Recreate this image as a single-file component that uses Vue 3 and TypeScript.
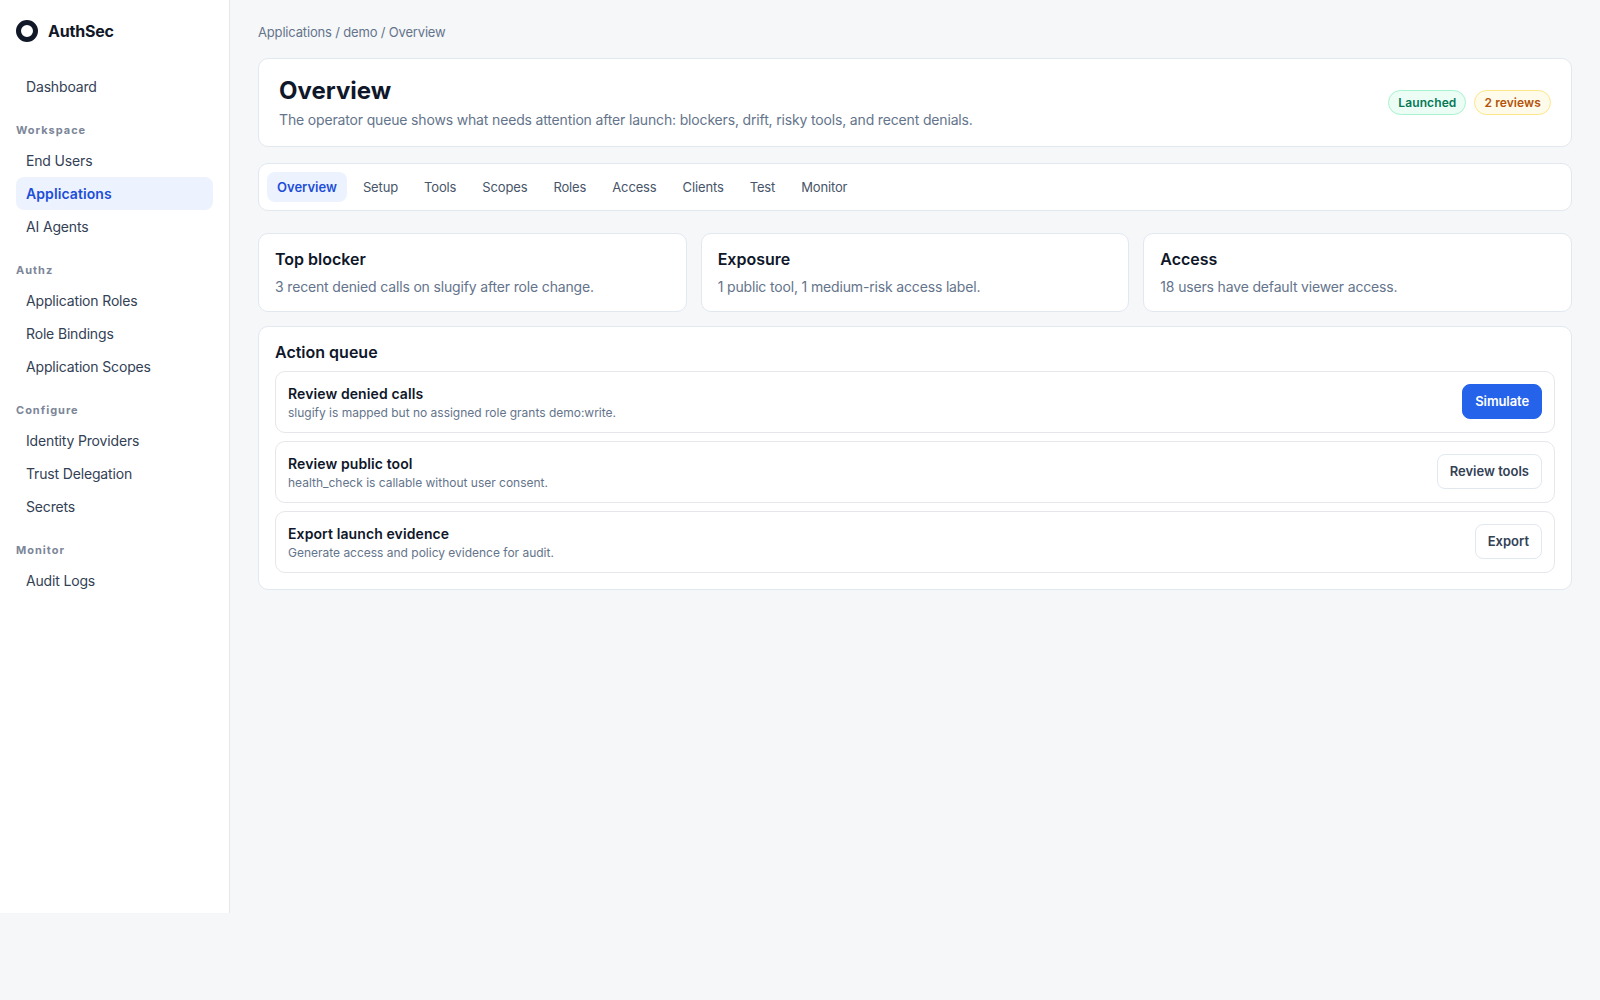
<script setup lang="ts">
const navGroups = [
  { label: '', items: ['Dashboard'] },
  { label: 'Workspace', items: ['End Users', 'Applications', 'AI Agents'] },
  { label: 'Authz', items: ['Application Roles', 'Role Bindings', 'Application Scopes'] },
  { label: 'Configure', items: ['Identity Providers', 'Trust Delegation', 'Secrets'] },
  { label: 'Monitor', items: ['Audit Logs'] }
]

const tabs = ['Overview', 'Setup', 'Tools', 'Scopes', 'Roles', 'Access', 'Clients', 'Test', 'Monitor']

const summaries = [
  { title: 'Top blocker', text: '3 recent denied calls on slugify after role change.' },
  { title: 'Exposure', text: '1 public tool, 1 medium-risk access label.' },
  { title: 'Access', text: '18 users have default viewer access.' }
]

const actions = [
  { title: 'Review denied calls', text: 'slugify is mapped but no assigned role grants demo:write.', button: 'Simulate', primary: true },
  { title: 'Review public tool', text: 'health_check is callable without user consent.', button: 'Review tools', primary: false },
  { title: 'Export launch evidence', text: 'Generate access and policy evidence for audit.', button: 'Export', primary: false }
]
</script>

<template>
  <div class="shell">
    <aside class="sidebar">
      <div class="brand">
        <span class="brand-mark"></span>
        <span class="brand-name">AuthSec</span>
      </div>
      <nav class="nav">
        <div v-for="group in navGroups" :key="group.label" class="nav-group">
          <div v-if="group.label" class="nav-label">{{ group.label }}</div>
          <a
            v-for="item in group.items"
            :key="item"
            class="nav-item"
            :class="{ active: item === 'Applications' }"
          >{{ item }}</a>
        </div>
      </nav>
    </aside>

    <main class="main">
      <div class="breadcrumb">Applications / demo / Overview</div>

      <header class="page-head">
        <div>
          <h1>Overview</h1>
          <p>The operator queue shows what needs attention after launch: blockers, drift, risky tools, and recent denials.</p>
        </div>
        <div class="badges">
          <span class="badge green">Launched</span>
          <span class="badge amber">2 reviews</span>
        </div>
      </header>

      <div class="tabs">
        <a v-for="tab in tabs" :key="tab" class="tab" :class="{ active: tab === 'Overview' }">{{ tab }}</a>
      </div>

      <section class="summary-grid">
        <div v-for="card in summaries" :key="card.title" class="card">
          <h3>{{ card.title }}</h3>
          <p>{{ card.text }}</p>
        </div>
      </section>

      <section class="card queue">
        <h3>Action queue</h3>
        <div class="queue-list">
          <div v-for="action in actions" :key="action.title" class="queue-row">
            <div>
              <div class="queue-title">{{ action.title }}</div>
              <div class="queue-text">{{ action.text }}</div>
            </div>
            <button class="btn" :class="{ primary: action.primary }">{{ action.button }}</button>
          </div>
        </div>
      </section>
    </main>
  </div>
</template>

<style>
html,
body {
  margin: 0;
  background: #f6f7f9;
}
</style>

<style scoped>
.shell {
  display: flex;
  align-items: flex-start;
  font-family: Inter, "Liberation Sans", sans-serif;
  color: #0f172a;
}
.sidebar {
  width: 230px;
  height: 913px;
  flex-shrink: 0;
  box-sizing: border-box;
  padding: 20px 16px;
  background: #fff;
  border-right: 1px solid #e5e7eb;
}
.brand {
  display: flex;
  align-items: center;
  gap: 10px;
  height: 22px;
  margin-bottom: 28px;
}
.brand-mark {
  width: 22px;
  height: 22px;
  box-sizing: border-box;
  border: 5px solid #111827;
  border-radius: 50%;
}
.brand-name {
  font-size: 16px;
  font-weight: 700;
  letter-spacing: -0.2px;
  color: #111827;
}
.nav-group {
  margin-bottom: 14px;
}
.nav-label {
  padding: 6px 0 7px;
  font-size: 11px;
  font-weight: 700;
  letter-spacing: 0.09em;
  color: #7c8698;
}
.nav-item {
  display: block;
  padding: 8px 10px;
  border-radius: 8px;
  font-size: 14px;
  letter-spacing: -0.16px;
  color: #334155;
}
.nav-item.active {
  background: #edf3fe;
  color: #1d4ed8;
  font-weight: 600;
  letter-spacing: 0.08px;
}
.main {
  flex: 1;
  min-width: 0;
  padding: 24px 28px;
}
.breadcrumb {
  margin-bottom: 18px;
  font-size: 13px;
  letter-spacing: -0.17px;
  color: #64748b;
}
.page-head {
  display: flex;
  align-items: center;
  justify-content: space-between;
  padding: 18px 20px;
  background: #fff;
  border: 1px solid #e2e8f0;
  border-radius: 10px;
}
.page-head h1 {
  margin: 0 0 5px;
  font-size: 24px;
  font-weight: 700;
  line-height: 1.2;
}
.page-head p {
  margin: 0;
  font-size: 14px;
  letter-spacing: -0.16px;
  color: #64748b;
}
.badges {
  display: flex;
  gap: 8px;
}
.badge {
  padding: 4px 9px;
  border: 1px solid;
  border-radius: 999px;
  font-size: 12px;
  font-weight: 600;
  line-height: 15px;
  letter-spacing: 0.1px;
}
.badge.green {
  background: #ecfdf5;
  border-color: #a7f3d0;
  color: #047857;
}
.badge.amber {
  background: #fffbeb;
  border-color: #fde68a;
  color: #b45309;
}
.tabs {
  display: flex;
  gap: 6px;
  margin: 16px 0 22px;
  padding: 8px;
  background: #fff;
  border: 1px solid #e2e8f0;
  border-radius: 10px;
}
.tab {
  padding: 7px 10px;
  border-radius: 8px;
  font-size: 13px;
  line-height: 16px;
  letter-spacing: -0.14px;
  color: #475569;
}
.tab.active {
  background: #edf3fe;
  color: #1d4ed8;
  font-weight: 600;
  letter-spacing: 0;
}
.summary-grid {
  display: grid;
  grid-template-columns: repeat(3, 1fr);
  gap: 14px;
  margin-bottom: 14px;
}
.card {
  padding: 15px 16px 16px;
  background: #fff;
  border: 1px solid #e2e8f0;
  border-radius: 10px;
}
.card h3 {
  margin: 0 0 9px;
  font-size: 16px;
  font-weight: 600;
}
.card p {
  margin: 0;
  font-size: 14px;
  letter-spacing: -0.16px;
  color: #64748b;
}
.queue-list {
  display: flex;
  flex-direction: column;
  gap: 8px;
}
.queue-row {
  display: flex;
  align-items: center;
  justify-content: space-between;
  padding: 12px;
  border: 1px solid #e5e7eb;
  border-radius: 10px;
}
.queue-title {
  font-size: 14px;
  font-weight: 600;
  line-height: 19px;
  letter-spacing: 0.1px;
}
.queue-text {
  margin-top: 2px;
  font-size: 12px;
  line-height: 15px;
  letter-spacing: -0.01px;
  color: #64748b;
}
.btn {
  height: 35px;
  padding: 0 12px 1px;
  background: #fff;
  border: 1px solid #e2e8f0;
  border-radius: 8px;
  font-family: inherit;
  font-size: 13px;
  font-weight: 600;
  color: #334155;
}
.btn.primary {
  background: #2563eb;
  border-color: #2563eb;
  color: #fff;
  letter-spacing: -0.1px;
}
</style>
